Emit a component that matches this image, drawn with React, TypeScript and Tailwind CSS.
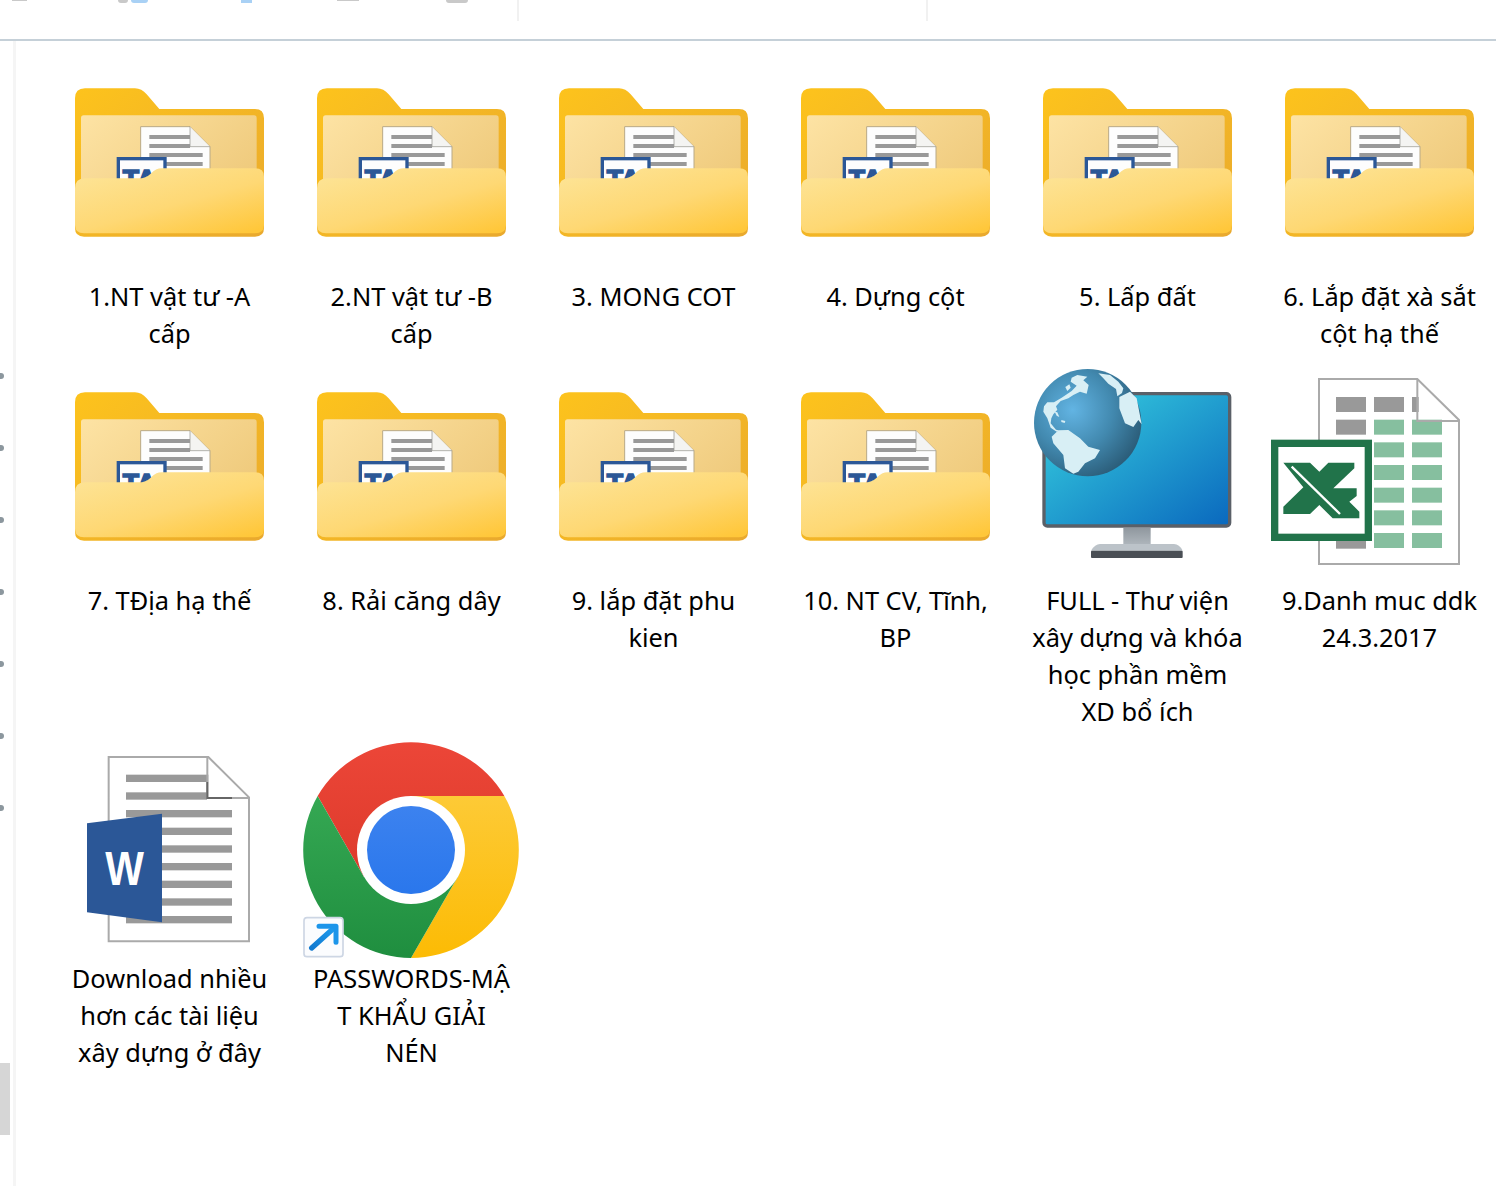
import React from 'react';

// every icon is drawn in a 648 unit box and shown at 216px
const FolderIcon: React.FC = () => (
  <svg width="216" height="216" viewBox="3 -39 648 648">
    <defs>
      <linearGradient id="folderBack" x1="0" y1="0" x2="1" y2="1">
        <stop offset="0" stopColor="#fdc31c" />
        <stop offset="1" stopColor="#e9a92e" />
      </linearGradient>
      <linearGradient id="folderPaper" x1="0" y1="0" x2="1" y2="0.6">
        <stop offset="0" stopColor="#fde3a4" />
        <stop offset="1" stopColor="#efca7c" />
      </linearGradient>
      <linearGradient id="folderFront" x1="0.1" y1="0" x2="0.9" y2="1">
        <stop offset="0" stopColor="#fde497" />
        <stop offset="0.55" stopColor="#fed874" />
        <stop offset="1" stopColor="#ffc73a" />
      </linearGradient>
      <clipPath id="folderPocket">
        <rect x="45" y="100" width="567" height="215" />
      </clipPath>
    </defs>
    <path d="M45 70 Q45 40 75 40 H225 Q245 40 260 58 L298 102 H585 Q612 102 612 130 V460 Q612 485 585 485 H72 Q45 485 45 460 Z" fill="url(#folderBack)" />
    <rect x="63" y="121" width="527" height="280" rx="8" fill="url(#folderPaper)" />
    <path d="M242 155 H390 L450 215 V320 H242 Z" fill="#fdfdfd" stroke="#b8a987" strokeWidth="3" />
    <path d="M390 155 V215 H450" fill="#f4f4f2" stroke="#8f8f88" strokeWidth="2" />
    <rect x="268" y="180" width="122" height="12" fill="#999" />
    <rect x="268" y="207" width="122" height="12" fill="#999" />
    <rect x="268" y="234" width="160" height="12" fill="#999" />
    <rect x="268" y="261" width="160" height="12" fill="#999" />
    <g clipPath="url(#folderPocket)">
      <rect x="175" y="251" width="140" height="100" fill="#fdfdfd" stroke="#2b5797" strokeWidth="10" />
      <text x="188" y="340" fill="#2b5797" stroke="#2b5797" strokeWidth="5" fontFamily="Liberation Sans, sans-serif" fontWeight="700" fontSize="80">TAI</text>
    </g>
    <path d="M45 340 Q45 310 75 310 H235 Q258 310 272 296 Q288 280 305 280 H585 Q612 280 612 305 V450 Q612 475 585 475 H72 Q45 475 45 450 Z" fill="url(#folderFront)" />
  </svg>
);

const GlobeIcon: React.FC = () => (
  <svg width="216" height="216" viewBox="27 18 648 648">
    <defs>
      <linearGradient id="screenFill" x1="0" y1="0" x2="1" y2="1">
        <stop offset="0" stopColor="#38d3e0" />
        <stop offset="1" stopColor="#0a68be" />
      </linearGradient>
      <radialGradient id="globeFill" cx="0.36" cy="0.38" r="0.75">
        <stop offset="0" stopColor="#62b4e3" />
        <stop offset="0.5" stopColor="#4289af" />
        <stop offset="1" stopColor="#26536d" />
      </radialGradient>
      <linearGradient id="standFill" x1="0" y1="0" x2="0" y2="1">
        <stop offset="0" stopColor="#8f979e" />
        <stop offset="1" stopColor="#b4bbc1" />
      </linearGradient>
    </defs>
    <rect x="72" y="101" width="557" height="397" rx="10" fill="url(#screenFill)" stroke="#5a6068" strokeWidth="10" />
    <rect x="310" y="503" width="82" height="60" fill="url(#standFill)" />
    <path d="M213 572 Q225 552 240 552 H462 Q478 552 488 572 Z" fill="#bcc3c9" />
    <rect x="213" y="572" width="275" height="22" rx="3" fill="#4a4f55" />
    <circle cx="203" cy="188" r="161" fill="url(#globeFill)" />
    <g fill="#d8eff5" transform="translate(30 15)">
      <path d="M125 38 L142 30 L172 35 L160 46 L176 60 L170 86 L150 80 L130 90 L115 100 L92 108 L78 124 L82 134 L70 148 L64 160 L62 175 L78 194 L86 196 L80 200 L62 188 L52 160 L40 140 L42 124 L52 112 L72 112 L95 98 L125 78 L140 62 L122 50 Z" />
      <path d="M106 66 L118 58 L122 68 L112 78 Z" />
      <path d="M74 140 L82 142 L88 156 L80 152 Z" />
      <path d="M94 165 L106 168 L104 174 L94 171 Z" />
      <path d="M65 215 L85 196 L115 195 L150 220 L175 245 L210 255 L195 280 L165 295 L145 320 L130 326 L105 310 L100 270 L70 235 Z" />
      <path d="M268 96 L300 80 L320 100 L335 178 L325 165 L310 186 L285 175 L268 130 Z" />
      <path d="M205 25 L240 30 L265 50 L280 70 L276 84 L262 94 L258 72 L235 56 L220 40 Z" />
    </g>
  </svg>
);

const sheetRows = [149, 217, 285, 353, 421, 489];

const ExcelIcon: React.FC = () => (
  <svg width="216" height="216" viewBox="33 -12 648 648">
    <path d="M177 27 H472 L597 150 V582 H177 Z" fill="#fff" stroke="#aaa" strokeWidth="6" />
    <rect x="228" y="81" width="90" height="45" fill="#999" />
    <rect x="342" y="81" width="90" height="45" fill="#999" />
    <rect x="456" y="81" width="20" height="45" fill="#999" />
    <rect x="228" y="149" width="90" height="45" fill="#999" />
    <rect x="228" y="491" width="90" height="45" fill="#999" />
    {sheetRows.map((y) => (
      <g key={y} fill="#86bf9f">
        <rect x="342" y={y} width="90" height="45" />
        <rect x="456" y={y} width="90" height="45" />
      </g>
    ))}
    <path d="M472 27 V153 H597" fill="none" stroke="#aaa" strokeWidth="6" />
    <rect x="44" y="220" width="281" height="282" fill="#fff" stroke="#21734a" strokeWidth="22" />
    <path d="M70 278 H150 L178 305 L205 278 H283 V295 L220 355 H290 V378 L268 395 L298 425 V445 H218 L178 405 L150 432 H70 V410 L130 352 Z" fill="#21734a" />
    <path d="M95 290 L240 432" stroke="#fff" strokeWidth="7" />
  </svg>
);

const wordLines = [196, 249, 302, 355, 408, 461, 514];

// the last row's icons sit 2px higher above their label, hence 218
const WordIcon: React.FC = () => (
  <svg width="216" height="218" viewBox="-42 -8 648 654">
    <path d="M101 37 H400 L522 158 V590 H101 Z" fill="#fff" stroke="#aaa" strokeWidth="6" />
    <rect x="153" y="90" width="247" height="22" fill="#999" />
    <rect x="153" y="143" width="243" height="22" fill="#999" />
    {wordLines.map((y) => (
      <rect key={y} x="153" y={y} width="318" height="22" fill="#999" />
    ))}
    <path d="M397 37 V160 H522" fill="none" stroke="#aaa" strokeWidth="6" />
    <path d="M397 112 V160 H471" fill="none" stroke="#666" strokeWidth="6" />
    <path d="M36 236 L261 207 V533 L36 503 Z" fill="#2b5797" />
    <text x="91" y="422" fill="#fff" fontFamily="Liberation Sans, sans-serif" fontWeight="700" fontSize="145" textLength="116" lengthAdjust="spacingAndGlyphs">W</text>
  </svg>
);

const ChromeIcon: React.FC = () => (
  <svg width="216" height="218" viewBox="24 21 648 654">
    <defs>
      <linearGradient id="chromeRed" x1="0" y1="0" x2="0" y2="1">
        <stop offset="0" stopColor="#ec4638" />
        <stop offset="1" stopColor="#dd3a2b" />
      </linearGradient>
      <linearGradient id="chromeYellow" x1="0" y1="0" x2="0" y2="1">
        <stop offset="0" stopColor="#fdca36" />
        <stop offset="1" stopColor="#fcbb04" />
      </linearGradient>
      <linearGradient id="chromeGreen" x1="0" y1="0" x2="0" y2="1">
        <stop offset="0" stopColor="#35a853" />
        <stop offset="1" stopColor="#1f8e3f" />
      </linearGradient>
      <linearGradient id="chromeBlue" x1="0" y1="0" x2="0" y2="1">
        <stop offset="0" stopColor="#3c82ef" />
        <stop offset="1" stopColor="#2a77ec" />
      </linearGradient>
      <linearGradient id="shortcutArrow" x1="0" y1="1" x2="1" y2="0">
        <stop offset="0" stopColor="#1279cf" />
        <stop offset="1" stopColor="#1d9bee" />
      </linearGradient>
    </defs>
    <path d="M68 183 A324 324 0 0 1 628 183 H348 V345 L207 426 Z" fill="url(#chromeRed)" />
    <path d="M348 183 H628 A324 324 0 0 1 348 669 L488 426 L348 345 Z" fill="url(#chromeYellow)" />
    <path d="M68 183 L207 426 L348 345 L488 426 L348 669 A324 324 0 0 1 68 183 Z" fill="url(#chromeGreen)" />
    <circle cx="348" cy="345" r="162" fill="#fff" />
    <circle cx="348" cy="345" r="132" fill="url(#chromeBlue)" />
    <rect x="27" y="548" width="117" height="117" rx="9" fill="#fbfcfe" stroke="#cdd6e4" strokeWidth="5" />
    <path d="M50 639 L116 580" stroke="url(#shortcutArrow)" strokeWidth="16" strokeLinecap="round" />
    <path d="M72 574 H123 V622" fill="none" stroke="#1c95ea" strokeWidth="15" strokeLinecap="round" strokeLinejoin="round" />
  </svg>
);

const items: { icon: React.FC; lines: string[] }[] = [
  { icon: FolderIcon, lines: ['1.NT vật tư -A', 'cấp'] },
  { icon: FolderIcon, lines: ['2.NT vật tư -B', 'cấp'] },
  { icon: FolderIcon, lines: ['3. MONG COT'] },
  { icon: FolderIcon, lines: ['4. Dựng cột'] },
  { icon: FolderIcon, lines: ['5. Lấp đất'] },
  { icon: FolderIcon, lines: ['6. Lắp đặt xà sắt', 'cột hạ thế'] },
  { icon: FolderIcon, lines: ['7. TĐịa hạ thế'] },
  { icon: FolderIcon, lines: ['8. Rải căng dây'] },
  { icon: FolderIcon, lines: ['9. lắp đặt phu', 'kien'] },
  { icon: FolderIcon, lines: ['10. NT CV, Tĩnh,', 'BP'] },
  { icon: GlobeIcon, lines: ['FULL - Thư viện', 'xây dựng và khóa', 'học phần mềm', 'XD bổ ích'] },
  { icon: ExcelIcon, lines: ['9.Danh muc ddk', '24.3.2017'] },
  { icon: WordIcon, lines: ['Download nhiều', 'hơn các tài liệu', 'xây dựng ở đây'] },
  { icon: ChromeIcon, lines: ['PASSWORDS-MẬ', 'T KHẨU GIẢI', 'NÉN'] },
];

const App: React.FC = () => {
  return (
    <div className="w-[1496px] h-[1186px] overflow-hidden bg-white text-black font-['Noto_Sans',sans-serif]">
      <div className="flex items-start h-[41px] border-b-2 border-[#c5d0d8]">
        <div className="ml-[12px] w-[15px] h-[1px] bg-[#c9c9c9]" />
        <div className="ml-[91px] w-[10px] h-[3px] rounded-b bg-[#c9c9c9]" />
        <div className="ml-[3px] w-[17px] h-[3px] rounded-b bg-[#a9d1f5]" />
        <div className="ml-[93px] w-[11px] h-[3px] bg-[#a9d1f5]" />
        <div className="ml-[85px] w-[22px] h-[1px] bg-[#c9c9c9]" />
        <div className="ml-[87px] w-[22px] h-[3px] rounded-b bg-[#c9c9c9]" />
        <div className="ml-[49px] w-[2px] h-[21px] bg-[#f1f1f1]" />
        <div className="ml-[407px] w-[2px] h-[21px] bg-[#f1f1f1]" />
      </div>
      <div className="flex h-[1145px]">
        <div className="w-[16px] shrink-0 border-r-[3px] border-[#f5f5f5] flex flex-col items-start">
          <div className="mt-[332px] flex flex-col gap-[66px]">
            {[0, 1, 2, 3, 4, 5, 6].map((dot) => (
              <div key={dot} className="w-[4px] h-[6px] rounded-r-full bg-[#8c979e]" />
            ))}
          </div>
          <div className="mt-[252px] w-[10px] h-[72px] bg-[#d6d6d6]" />
        </div>
        <div className="ml-[32px] pt-[21px] grid grid-cols-[repeat(6,242px)] grid-rows-[292px_auto_auto] gap-y-[12px] items-start content-start">
          {items.map((item, index) => (
            <div key={index} className="flex flex-col items-center">
              <item.icon />
              <div className="pl-[1px] text-[25.4px] leading-[37px] text-center">
                {item.lines.map((line) => (
                  <div key={line} className="whitespace-nowrap">{line}</div>
                ))}
              </div>
            </div>
          ))}
        </div>
      </div>
    </div>
  );
};

export default App;
